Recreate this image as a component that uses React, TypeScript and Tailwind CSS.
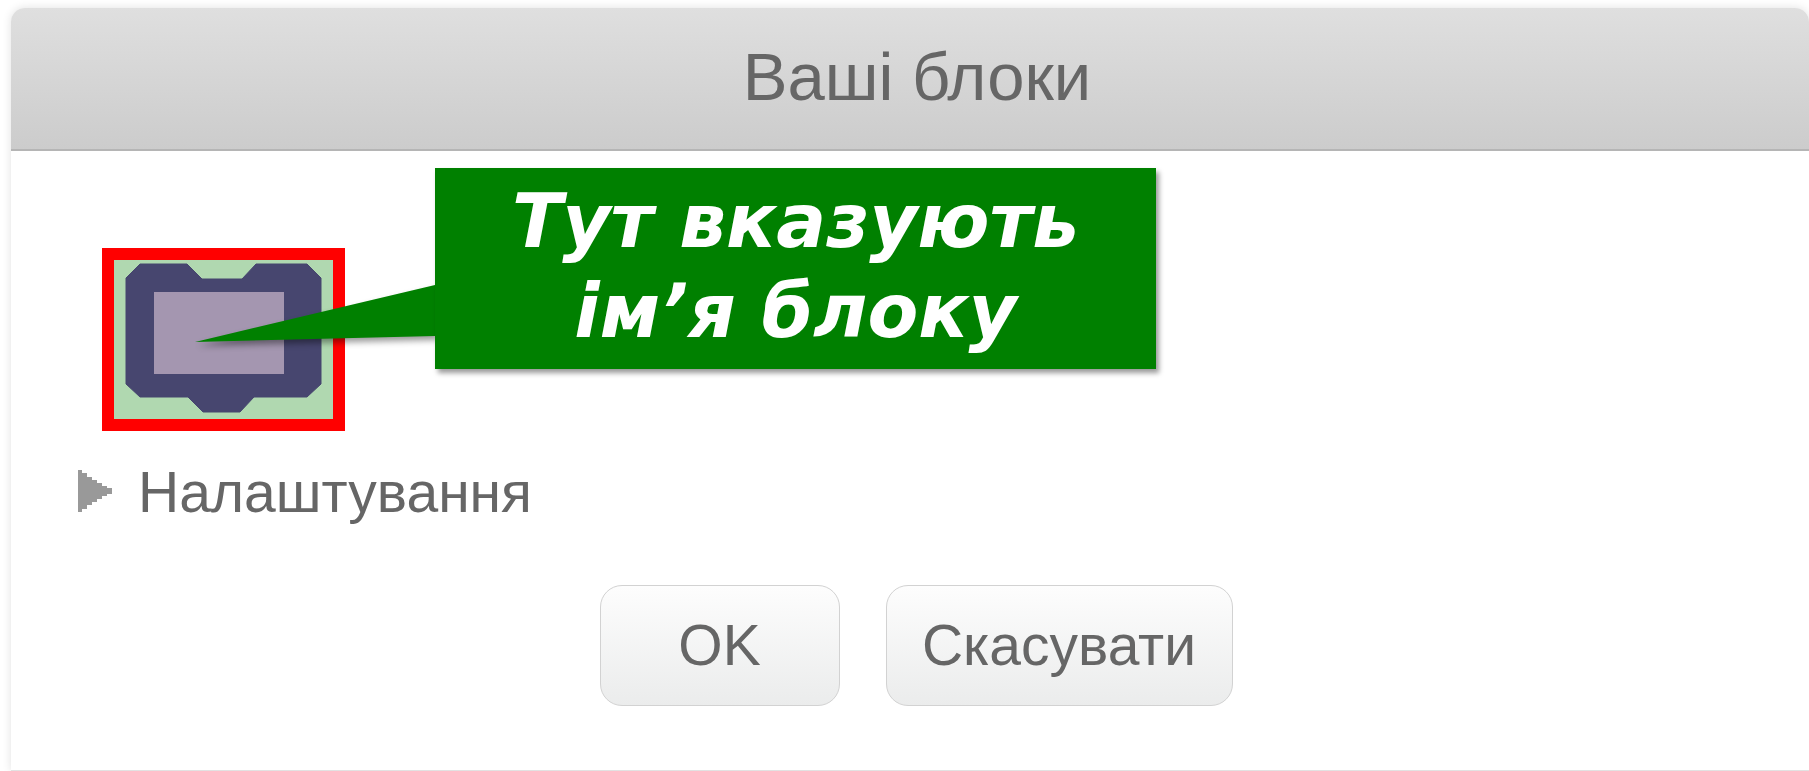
const sans = { fontFamily: '"Liberation Sans", Arial, sans-serif' };

function BlockIcon() {
	return (
		<svg width="219" height="159" viewBox="0 0 219 159" className="block">
			<path
				d="M26 4H73L88 19H128L142 4H193L207 18V124L193 137H140L126 152H89L74 137H26L12 124V18Z"
				fill="#47466f"
				stroke="#47466f"
				strokeWidth="1"
				strokeLinejoin="round"
			/>
			<rect x="40" y="32" width="130" height="82" fill="#a496b0" />
		</svg>
	);
}

function DialogButton({ label, className }: { label: string; className: string }) {
	return (
		<button
			className={`h-[121px] rounded-[22px] border border-[#d2d2d2] bg-gradient-to-b from-[#fdfdfd] to-[#ebecec] text-[57px] text-[#666666] ${className}`}
		>
			{label}
		</button>
	);
}

export default function App() {
	return (
		<div className="h-[771px] w-[1809px] overflow-hidden bg-white pl-[11px] pt-[8px]" style={sans}>
			<div className="flex h-[763px] w-[1798px] flex-col rounded-t-[14px] border-b border-[#e2e2e2] bg-white shadow-[0_0_10px_rgba(0,0,0,0.12)]">
				<header className="flex h-[143px] shrink-0 items-center justify-center rounded-t-[14px] border-b-2 border-[#b5b5b5] bg-gradient-to-b from-[#dfdfdf] to-[#cccccc] pb-[3px] pl-[14px] text-[67px] text-[#666666]">
					Ваші блоки
				</header>

				<div className="relative flex-1">
					<div className="ml-[91px] mt-[97px] h-[183px] w-[243px] border-[12px] border-[#ff0000] bg-[#b0d8b0]">
						<BlockIcon />
					</div>

					<div className="ml-[67px] mt-[30px] flex h-[60px] items-center gap-[26px] text-[57px] text-[#666666]">
						{/* stepped disclosure arrow */}
						<svg width="34" height="42" viewBox="0 0 34 42" className="shrink-0">
							<path
								d="M0 0H4V3H9V7H14V10H19V13H24V16H29V18H34V24H29V26H24V29H19V32H14V35H9V39H4V42H0Z"
								fill="#999999"
							/>
						</svg>
						<span className="pt-[3px]">Налаштування</span>
					</div>

					<div className="mt-[64px] flex justify-center gap-[46px] pl-[12px]">
						<DialogButton label="OK" className="w-[240px]" />
						<DialogButton label="Скасувати" className="w-[347px]" />
					</div>

					{/* green callout pointing at the block name */}
					<svg
						width="240"
						height="60"
						viewBox="0 0 240 60"
						className="absolute left-[184px] top-[134px] overflow-visible drop-shadow-[3px_4px_3px_rgba(0,0,0,0.4)]"
					>
						<path d="M240 0L0 57L240 51Z" fill="#008000" />
					</svg>
					<div
						className="absolute left-[424px] top-[17px] flex h-[201px] w-[721px] flex-col items-center justify-center bg-[#008000] pb-[6px] text-[74px] font-bold italic leading-[90px] text-white shadow-[3px_4px_5px_rgba(0,0,0,0.4)]"
						style={{ fontFamily: '"DejaVu Sans", Verdana, sans-serif' }}
					>
						<span>Тут вказують</span>
						<span>імʼя блоку</span>
					</div>
				</div>
			</div>
		</div>
	);
}
